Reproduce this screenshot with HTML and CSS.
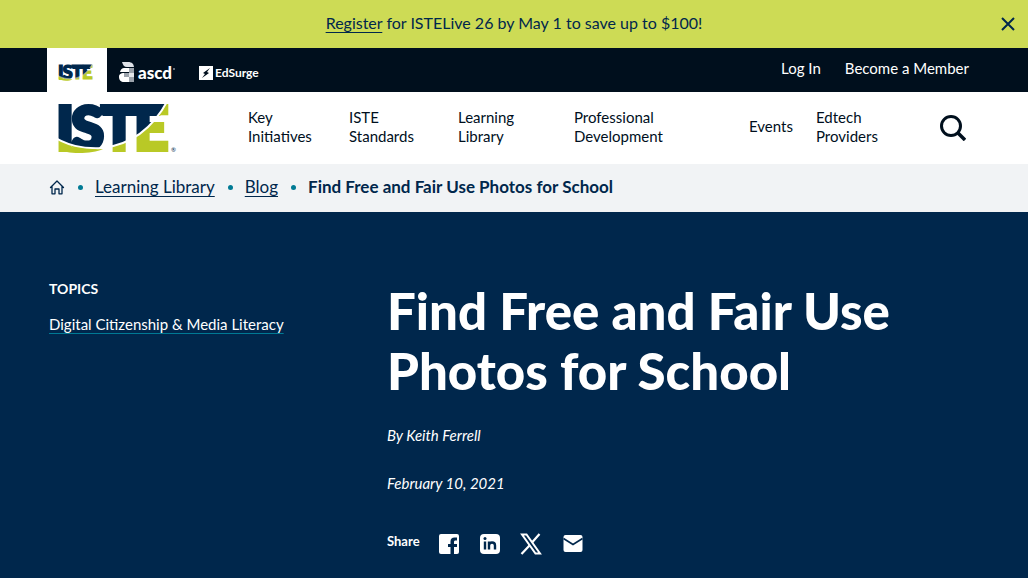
FILE: index.html
```html
<!DOCTYPE html>
<html lang="en">
<head>
  <meta charset="UTF-8">
  <meta name="viewport" content="width=device-width, initial-scale=1.0">
  <title>Find Free and Fair Use Photos for School | ISTE</title>
  <link rel="stylesheet" href="styles.css">
</head>
<body>
  <div class="announcement">
    <p><a href="#">Register</a> for ISTELive 26 by May 1 to save up to $100!</p>
    <button class="close" type="button" aria-label="Close">
      <svg width="14" height="14" viewBox="0 0 14 14"><path d="M1 1l12 12M13 1L1 13" stroke="#00274c" stroke-width="2" fill="none"/></svg>
    </button>
  </div>

  <div class="topbar">
    <div class="brands">
      <a class="brand active" href="#" aria-label="ISTE">
        <svg width="40" height="26" viewBox="-6 -18 130 84">
          <path d="M44 0h65l-8 11H44z" fill="#00274c"/>
          <text class="logo-text" x="-3 12 42 75" y="45" font-size="60">ISTE</text>
          <path d="M0 36C12 43 26 46 44 44C36 50 18 50 8 47H0z" fill="#b9c926"/>
        </svg>
      </a>
      <a class="brand" href="#" aria-label="ascd">
        <svg width="56" height="24" viewBox="0 0 56 24">
          <path d="M3 1h6c4 0 6 2 6 6V6H8C5 6 4 4 3 1z" fill="#dfe3e8"/>
          <path d="M5 7h5v4H1c1-3 2-4 4-4zM5 12v4h5v5H5c-3 0-5-2-5-5s2-4 5-4z" fill="#fff"/>
          <path d="M10 7h5v5h-5zM5 12h5v4H5zM10 16h5v5h-5z" fill="#9ba2ab"/>
          <path d="M10 12h5v4h-5z" fill="#e3e6ea"/>
          <text class="brand-text" x="19" y="18" font-size="17">ascd</text>
          <circle cx="55" cy="8" r="1" fill="#8b929c"/>
        </svg>
      </a>
      <a class="brand" href="#" aria-label="EdSurge">
        <svg width="62" height="16" viewBox="0 0 62 16">
          <path d="M0 1h14v14H0z" fill="#fff"/>
          <path d="M11 3L4 8l2 1-3 4 7-5-2-1z" fill="#000f1d"/>
          <text class="brand-text thin" x="16" y="12" font-size="12">EdSurge</text>
        </svg>
      </a>
    </div>
    <div class="account">
      <a href="#">Log In</a>
      <a href="#">Become a Member</a>
    </div>
  </div>

  <header class="header">
    <a class="logo" href="#" aria-label="ISTE home">
      <svg width="130" height="76" viewBox="-6 -15 130 76">
        <defs>
          <!-- navy above the white curve, green below it -->
          <pattern id="swoosh" patternUnits="userSpaceOnUse" x="-10" y="-20" width="140" height="90" viewBox="-10 -20 140 90">
            <path d="M-10-20h140v90H-10z" fill="#00274c"/>
            <path d="M-10 29C8 41 24 44 43 43C72 40 94 23 109-5H132V80H-12z" fill="#b9c926" stroke="#fff" stroke-width="2"/>
          </pattern>
        </defs>
        <!-- top bar that joins the T and the E -->
        <path d="M44 0h65l-8 11H44z" fill="url(#swoosh)"/>
        <text class="logo-text" x="-3 12 42 75" y="45" font-size="60">ISTE</text>
        <path d="M0 38C12 43 26 45 44 44C36 48 18 49 8 47H0z" fill="#b9c926"/>
        <path d="M109 1v9h-6z" fill="#b9c926"/>
        <text class="mark" x="112" y="47" font-size="6">®</text>
      </svg>
    </a>
    <nav class="nav">
      <a href="#">Key<br>Initiatives</a>
      <a href="#">ISTE<br>Standards</a>
      <a href="#">Learning<br>Library</a>
      <a href="#">Professional<br>Development</a>
      <a href="#">Events</a>
      <a href="#">Edtech<br>Providers</a>
    </nav>
    <button class="search" type="button" aria-label="Search">
      <svg width="26" height="26" viewBox="0 0 26 26"><circle cx="11" cy="11" r="9.500" fill="none" stroke="#000f1d" stroke-width="3"/><path d="M18 18l7 7" stroke="#000f1d" stroke-width="3.500"/></svg>
    </button>
  </header>

  <nav class="breadcrumbs" aria-label="Breadcrumb">
    <a class="home" href="#" aria-label="Home">
      <svg width="16" height="16" viewBox="0 0 16 16"><path d="M1.500 8.500L8 2l6.500 6.500M3 7.500v7.300h3V10h4v4.800h3V7.500" fill="none" stroke="#00274c" stroke-width="1.300" stroke-linejoin="round" stroke-linecap="round"/></svg>
    </a>
    <span class="dot"></span>
    <a href="#">Learning Library</a>
    <span class="dot"></span>
    <a href="#">Blog</a>
    <span class="dot"></span>
    <strong>Find Free and Fair Use Photos for School</strong>
  </nav>

  <main class="hero">
    <aside class="topics">
      <h2>TOPICS</h2>
      <a href="#">Digital Citizenship &amp; Media Literacy</a>
    </aside>
    <article class="intro">
      <h1>Find Free and Fair Use Photos for School</h1>
      <p class="meta">By Keith Ferrell</p>
      <p class="meta">February 10, 2021</p>
      <div class="share">
        <span>Share</span>
        <a href="#" aria-label="Facebook">
          <svg width="24" height="24" viewBox="0 0 24 24"><path d="M4 2h16a2 2 0 0 1 2 2v16a2 2 0 0 1-2 2h-3v-7h3v-3h-3v-2c0-1 .5-1.500 1.500-1.500H20V5.500h-2.500C15 5.500 13.500 7 13.500 9.500V12H11v3h2.500v7H4a2 2 0 0 1-2-2V4a2 2 0 0 1 2-2z" fill="#fff"/></svg>
        </a>
        <a href="#" aria-label="LinkedIn">
          <svg width="24" height="24" viewBox="0 0 24 24"><rect x="2" y="2" width="20" height="20" rx="4" fill="#fff"/><circle cx="7" cy="6.500" r="1.500" fill="#00274c"/><path d="M7 9.500v8M11 9.500v8M11 13.500c0-4 6-4 6 0v4" fill="none" stroke="#00274c" stroke-width="2.400"/></svg>
        </a>
        <a href="#" aria-label="X">
          <svg width="24" height="24" viewBox="0 0 24 24"><path d="M3 2.500h4.500L21 21.500h-4.500z" fill="none" stroke="#fff" stroke-width="2"/><path d="M20.500 2L13 10.500M10.500 13.500L2.500 22" stroke="#fff" stroke-width="2.200"/></svg>
        </a>
        <a href="#" aria-label="Email">
          <svg width="24" height="24" viewBox="0 0 24 24"><rect x="3.500" y="3" width="19" height="17" rx="2" fill="#fff"/><path d="M3.500 6.500l9.500 6 9.500-6" fill="none" stroke="#00274c" stroke-width="1.600"/></svg>
        </a>
      </div>
    </article>
  </main>
</body>
</html>
```

FILE: styles.css
```css
* {
  box-sizing: border-box;
}
body {
  margin: 0;
  min-height: 100vh;
  display: flex;
  flex-direction: column;
  font-family: Lato, "Liberation Sans", sans-serif;
  font-size: 16px;
  line-height: 24px;
  color: #00274c;
  background: #fff;
}
a {
  color: inherit;
}
button {
  display: flex;
  padding: 0;
  border: none;
  background: none;
  cursor: pointer;
}
svg {
  display: block;
}
.announcement {
  display: flex;
  align-items: center;
  height: 48px;
  padding: 0 13px 0 27px;
  background: #cddb55;
}
.announcement p {
  flex: 1;
  margin: 0;
  padding-bottom: 3px;
  text-align: center;
}
.announcement a, .breadcrumbs a {
  text-underline-offset: 3px;
}
.topbar {
  display: flex;
  justify-content: space-between;
  height: 44px;
  padding: 0 59px 0 47px;
  background: #000f1d;
}
.brands {
  display: flex;
}
.brand {
  display: flex;
  align-items: center;
  padding: 6px 12px 0;
}
.brand.active {
  padding: 6px 10px 0;
  background: #fff;
}
.logo-text {
  font-family: Lato, sans-serif;
  font-weight: 900;
  fill: url(#swoosh);
  stroke: url(#swoosh);
  stroke-width: 4px;
}
.brand-text {
  font-family: Lato, sans-serif;
  font-weight: 900;
  fill: #fff;
}
.brand-text.thin {
  font-weight: 700;
}
.mark {
  fill: #00274c;
}
.account {
  display: flex;
  align-items: center;
  gap: 24px;
  padding-bottom: 4px;
  font-size: 15px;
  color: #fff;
}
.account a, .nav a {
  text-decoration: none;
}
.header {
  display: flex;
  align-items: center;
  height: 72px;
  padding: 0 62px 0 53px;
}
.nav {
  flex: 1;
  display: grid;
  grid-template-columns: 101fr 109fr 116fr 175fr 67fr 124fr;
  align-items: center;
  margin-left: 65px;
  padding-bottom: 3px;
  font-size: 15px;
  line-height: 19px;
  color: #000f1d;
}
.breadcrumbs {
  display: flex;
  align-items: center;
  height: 48px;
  padding: 0 49px 2px;
  background: #f1f3f5;
  font-size: 17px;
}
.dot {
  width: 5px;
  height: 5px;
  margin: 0 12px 0 13px;
  border-radius: 50%;
  background: #007a94;
}
.hero {
  flex: 1;
  display: grid;
  grid-template-columns: 338fr 593fr;
  padding: 65px 48px 20px 49px;
  background: #00274c;
  color: #fff;
}
.topics {
  font-size: 15px;
}
.topics h2 {
  margin: 0 0 11px;
  font-size: 14px;
  line-height: 24px;
}
.topics a {
  text-decoration-color: #007a94;
  text-underline-offset: 3px;
}
h1 {
  margin: 4px 0 22px;
  max-width: 560px;
  font-size: 51px;
  font-weight: 900;
  line-height: 60px;
}
.meta {
  margin: 0 0 24px;
  font-size: 15px;
  font-style: italic;
}
.share {
  display: flex;
  gap: 17px;
  margin-top: 37px;
  font-size: 13px;
  font-weight: 700;
}
.share span {
  line-height: 18px;
}
```
